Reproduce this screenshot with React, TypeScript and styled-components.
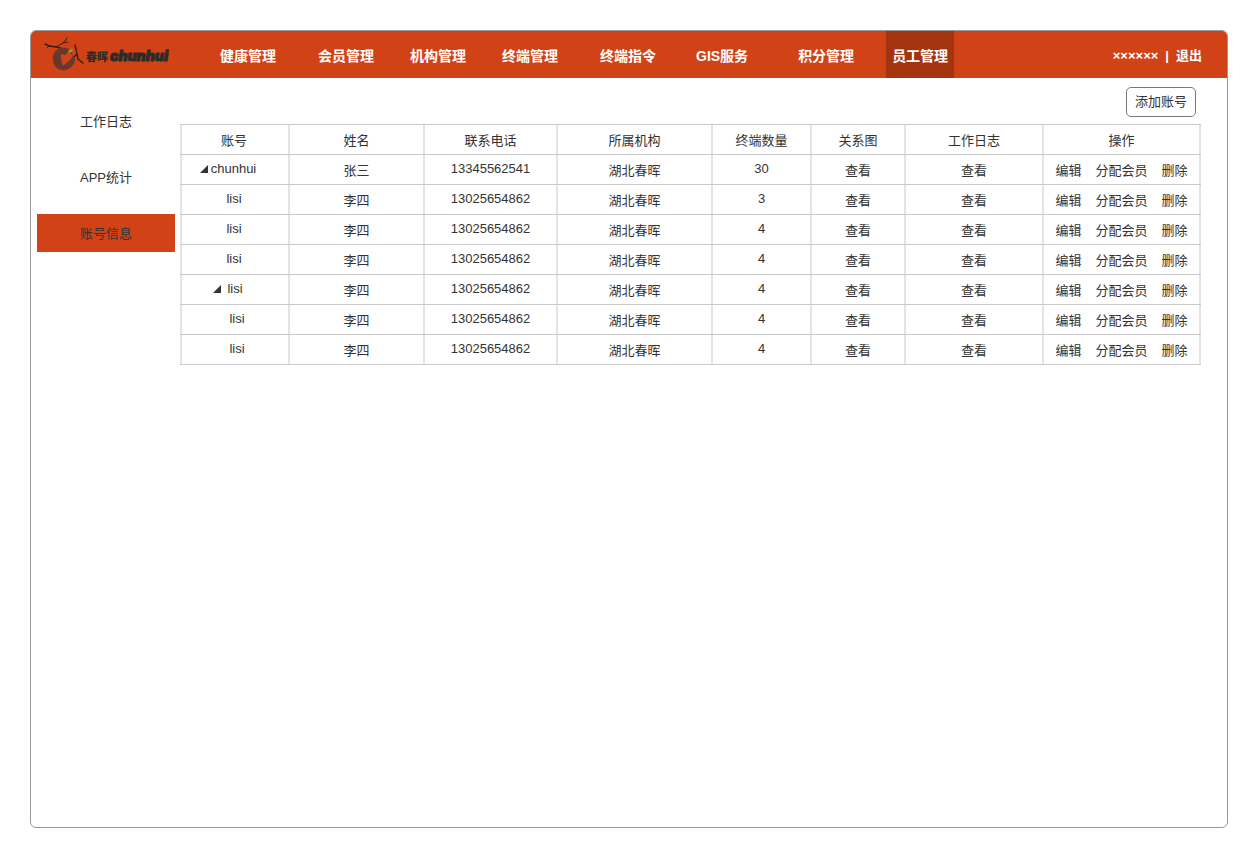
import React from "react";
import styled, { createGlobalStyle } from "styled-components";

const Global = createGlobalStyle`
  * { box-sizing: border-box; }
  body {
    margin: 0;
    background: #fff;
    color: #333;
    font: 13px/20px "Liberation Sans", Arial, "Noto Sans CJK SC", sans-serif;
  }
  a { color: inherit; text-decoration: none; }
`;

const Page = styled.div`
  display: flex;
  min-height: 100vh;
  padding: 30px;
`;

const Frame = styled.div`
  flex: 1;
  min-width: 0;
  border: 1px solid #999;
  border-radius: 6px;
  overflow: hidden;
`;

const Header = styled.header`
  display: flex;
  height: 47px;
  padding-right: 25px;
  background: #d14316;
  color: #fff;
`;

const Brand = styled.a`
  display: flex;
  align-items: center;
  width: 183px;
  padding-left: 12px;
  color: #2b2b2b;
`;

const BrandMark = styled.svg`
  width: 42px;
  height: 36px;
  flex: none;
`;

const BrandCn = styled.span`
  margin-left: 1px;
  padding-top: 2px;
  font: 900 11px/20px "Noto Sans CJK SC", sans-serif;
`;

const BrandLatin = styled.span`
  margin-left: 2px;
  padding-top: 2px;
  font: italic 900 14px/20px Inter, sans-serif;
  -webkit-text-stroke: 1px #2b2b2b;
`;

const Nav = styled.nav`
  display: flex;
  flex: 1;
`;

const NavItem = styled.a<{ $gap: number; $active?: boolean }>`
  display: flex;
  align-items: center;
  margin-left: ${(p) => p.$gap}px;
  padding: 2px 6px 0;
  white-space: nowrap;
  font-size: 14px;
  font-weight: 700;
  background: ${(p) => (p.$active ? "#a3340f" : "transparent")};
`;

const Account = styled.div`
  display: flex;
  align-items: center;
  gap: 7px;
  padding-top: 2px;
  font-weight: 700;
  white-space: nowrap;
`;

const Body = styled.div`
  display: flex;
  gap: 5px;
  padding: 9px 26px 24px 6px;
`;

const Side = styled.nav`
  display: flex;
  flex-direction: column;
  flex: none;
  gap: 18px;
  width: 138px;
  padding-top: 15px;
`;

const SideItem = styled.a<{ $active?: boolean }>`
  height: 38px;
  padding-top: 2px;
  line-height: 36px;
  text-align: center;
  background: ${(p) => (p.$active ? "#d14316" : "transparent")};
`;

const Main = styled.main`
  flex: 1;
  min-width: 0;
`;

const Toolbar = styled.div`
  display: flex;
  justify-content: flex-end;
  padding: 0 5px 7px;
`;

const AddButton = styled.button`
  width: 70px;
  height: 30px;
  padding: 0;
  border: 1px solid #797979;
  border-radius: 5px;
  background: #fff;
  color: #333;
  font: inherit;
`;

const Table = styled.table`
  width: 100%;
  table-layout: fixed;
  border-spacing: 0;
  border-bottom: 1px solid #c9c9c9;
`;

const cell = `
  height: 30px;
  border-top: 1px solid #c9c9c9;
  box-shadow: inset -2px 0 #e4e4e4;
  text-align: center;
  font-weight: 400;
  white-space: nowrap;
  &:first-child { box-shadow: inset -2px 0 #e4e4e4, inset 2px 0 #e4e4e4; }
`;

const Th = styled.th`
  ${cell}
  padding: 2px 2px 0 0;
`;

const Td = styled.td<{ $latin?: boolean }>`
  ${cell}
  padding: ${(p) => (p.$latin ? "0 2px 2px 0" : "3px 2px 0 0")};
`;

const TreeName = styled.span<{ $shift: number; $gap: number }>`
  display: inline-flex;
  align-items: center;
  gap: ${(p) => p.$gap}px;
  padding-left: ${(p) => Math.max(p.$shift, 0)}px;
  padding-right: ${(p) => Math.max(-p.$shift, 0)}px;
`;

const Caret = styled.svg`
  width: 8px;
  height: 8px;
`;

const Actions = styled.span`
  display: inline-flex;
  gap: 14px;
`;

const navItems = [
  { label: "健康管理", gap: 0 },
  { label: "会员管理", gap: 30 },
  { label: "机构管理", gap: 24 },
  { label: "终端管理", gap: 24 },
  { label: "终端指令", gap: 30 },
  { label: "GIS服务", gap: 28 },
  { label: "积分管理", gap: 38 },
  { label: "员工管理", gap: 26, active: true },
];

const columns = [
  { label: "账号", share: 110 },
  { label: "姓名", share: 135 },
  { label: "联系电话", share: 133 },
  { label: "所属机构", share: 155 },
  { label: "终端数量", share: 99 },
  { label: "关系图", share: 94 },
  { label: "工作日志", share: 138 },
  { label: "操作", share: 157 },
];
const total = columns.reduce((sum, c) => sum + c.share, 0);

const leaf = { account: "lisi", name: "李四", phone: "13025654862", count: 4, shift: 0, gap: 0, open: false };
const rows = [
  { account: "chunhui", name: "张三", phone: "13345562541", count: 30, shift: -12, gap: 3, open: true },
  { ...leaf, count: 3 },
  leaf,
  leaf,
  { ...leaf, shift: -12, gap: 6, open: true },
  { ...leaf, shift: 6 },
  { ...leaf, shift: 6 },
];

export default function App() {
  return (
    <>
      <Global />
      <Page>
        <Frame>
          <Header>
            <Brand href="#">
              <BrandMark viewBox="0 0 42 36" aria-hidden="true">
                <g fill="none" stroke="#3a1c12" strokeLinecap="round">
                  <path d="M2 7 6 9 14 10 20 12" strokeWidth="1.500" />
                  <path d="M13 10 20 6 24 1M6 9 4 11M20 6 25 5" strokeWidth="1" />
                  <path d="M29 22 34 17 32 8M34 17 35 22 40 26" strokeWidth="1.400" />
                </g>
                <path d="M18 11C12 12 9 18 10 24C11 31 17 34 22 33C28 32 32 27 32 22L29 16C27 11 22 10 18 11Z" fill="#67392c" />
                <path d="M18 17 22 18 25 15 30 18 28 22 20 29C19 25 17 21 18 17Z" fill="#d14316" />
                <path d="M25 14 28 12 29 15 26 16ZM28 12 30 12 29 15Z" fill="#79a33a" />
              </BrandMark>
              <BrandCn>春晖</BrandCn>
              <BrandLatin>chunhui</BrandLatin>
            </Brand>
            <Nav>
              {navItems.map((n) => (
                <NavItem key={n.label} href="#" $gap={n.gap} $active={n.active}>{n.label}</NavItem>
              ))}
            </Nav>
            <Account>
              <span>××××××</span>
              <span>|</span>
              <a href="#">退出</a>
            </Account>
          </Header>
          <Body>
            <Side>
              <SideItem href="#">工作日志</SideItem>
              <SideItem href="#">APP统计</SideItem>
              <SideItem href="#" $active>账号信息</SideItem>
            </Side>
            <Main>
              <Toolbar>
                <AddButton type="button">添加账号</AddButton>
              </Toolbar>
              <Table>
                <colgroup>
                  {columns.map((c) => (
                    <col key={c.label} style={{ width: `${(c.share / total) * 100}%` }} />
                  ))}
                </colgroup>
                <thead>
                  <tr>{columns.map((c) => <Th key={c.label} scope="col">{c.label}</Th>)}</tr>
                </thead>
                <tbody>
                  {rows.map((r, i) => (
                    <tr key={i}>
                      <Td $latin>
                        <TreeName $shift={r.shift} $gap={r.gap}>
                          {r.open && (
                            <Caret viewBox="0 0 8 8" aria-hidden="true">
                              <path d="M8 0V8H0Z" fill="#333" />
                            </Caret>
                          )}
                          {r.account}
                        </TreeName>
                      </Td>
                      <Td>{r.name}</Td>
                      <Td $latin>{r.phone}</Td>
                      <Td>湖北春晖</Td>
                      <Td $latin>{r.count}</Td>
                      <Td><a href="#">查看</a></Td>
                      <Td><a href="#">查看</a></Td>
                      <Td>
                        <Actions>
                          <a href="#">编辑</a>
                          <a href="#">分配会员</a>
                          <a href="#">删除</a>
                        </Actions>
                      </Td>
                    </tr>
                  ))}
                </tbody>
              </Table>
            </Main>
          </Body>
        </Frame>
      </Page>
    </>
  );
}
